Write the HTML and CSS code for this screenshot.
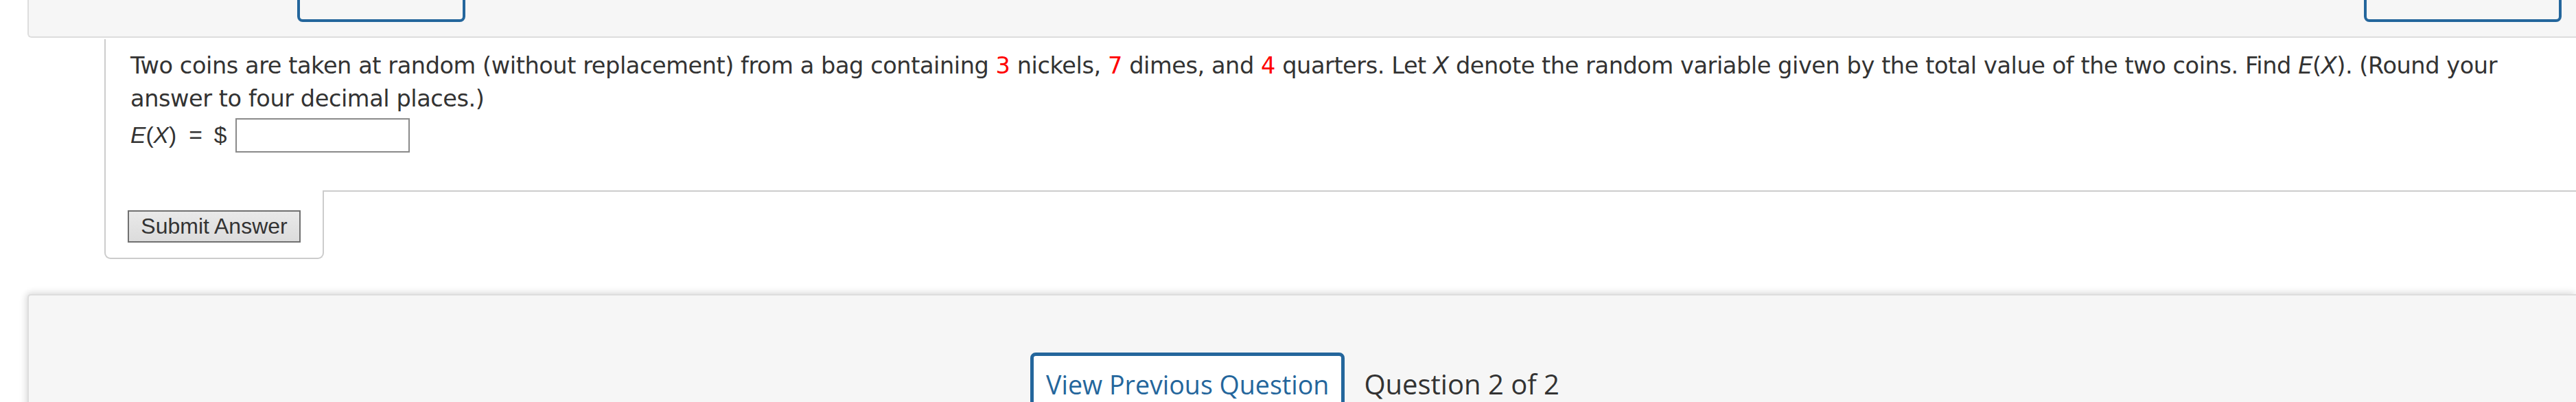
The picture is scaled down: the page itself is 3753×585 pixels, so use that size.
FILE: index.html
```html
<!DOCTYPE html>
<html lang="en">
<head>
<meta charset="utf-8">
<title>Question 2 of 2</title>
<link rel="stylesheet" href="styles.css">
</head>
<body>
<div class="top-panel">
  <div class="top-box top-box-left"></div>
  <div class="top-spacer"></div>
  <div class="top-box top-box-right"></div>
</div>

<div class="question">
  <p class="q-text">Two coins are taken at random (without replacement) from a bag containing <span class="red">3</span> nickels, <span class="red">7</span> dimes, and <span class="red">4</span> quarters. Let <i>X</i> denote the random variable given by the total value of the two coins. Find <i>E</i>(<i>X</i>). (Round your answer to four decimal places.)</p>
  <div class="answer-row">
    <span class="math"><i>E</i>(<i>X</i>)</span><span class="math eq">=</span><span class="math dollar">$</span>
    <input class="answer-input" type="text" aria-label="E(X)">
  </div>
</div>
<div class="submit-row">
  <div class="submit-tab">
    <button class="submit-btn" type="button">Submit Answer</button>
  </div>
  <div class="submit-filler"></div>
</div>

<div class="nav-panel">
  <button class="prev-btn" type="button">View Previous Question</button>
  <span class="q-count">Question 2 of 2</span>
</div>
</body>
</html>
```

FILE: styles.css
```css
html, body {
  margin: 0;
  padding: 0;
  background: #ffffff;
  overflow: hidden;
}

body {
  color: #333333;
  font-family: "DejaVu Sans", Verdana, sans-serif;
}

/* top panel (cut off at the top of the viewport) */
.top-panel {
  margin-left: 40px;
  height: 55px;
  box-sizing: border-box;
  background: #f6f6f6;
  border-left: 2px solid #dddddd;
  border-bottom: 2px solid #dddddd;
  border-bottom-left-radius: 6px;
  display: flex;
  align-items: flex-end;
  padding: 0 21px 21px 391px;
  overflow: hidden;
}

.top-spacer {
  flex: 1;
}

.top-box {
  height: 90px;
  flex: none;
  box-sizing: border-box;
  border: 4px solid #24669c;
  border-radius: 8px;
  background: #f6f6f6;
}

.top-box-left { width: 245px; }
.top-box-right { width: 288px; }

/* question block */
.question {
  margin-left: 152px;
  margin-top: 2px;
  border-left: 2px solid #cccccc;
  padding: 15px 0 55px 36px;
}

.q-text {
  margin: 0;
  font-size: 33.6px;
  line-height: 48px;
  letter-spacing: -0.44px;
  max-width: 3500px;
}

.red {
  color: #ff0000;
}

.answer-row {
  display: flex;
  align-items: center;
  margin-top: 4px;
  height: 50px;
}

.math {
  font-family: "Liberation Sans", Arial, sans-serif;
  font-size: 33.6px;
}

.eq {
  margin: 0 17px 0 18px;
}

.dollar {
  margin-right: 13px;
}

.answer-input {
  width: 254px;
  height: 50px;
  box-sizing: border-box;
  border: 2px solid #8a8a8a;
  border-radius: 0;
  background: #ffffff;
  margin: 0;
  padding: 0;
}

/* submit tab */
.submit-row {
  display: flex;
  margin-left: 152px;
}

.submit-tab {
  border: 2px solid #cccccc;
  border-top: none;
  border-radius: 0 0 9px 9px;
  padding: 29px 32px 22px 32px;
}

.submit-btn {
  display: block;
  width: 252px;
  height: 47px;
  margin: 0;
  padding: 0;
  box-sizing: border-box;
  border: 2px solid #707070;
  background: linear-gradient(#e9e9e9, #dcdcdc);
  font-family: "Liberation Sans", Arial, sans-serif;
  font-size: 32px;
  color: #333333;
}

.submit-filler {
  flex: 1;
  border-top: 2px solid #cccccc;
}

/* bottom navigation panel */
.nav-panel {
  margin-top: 51px;
  margin-left: 40px;
  height: 200px;
  background: #f6f6f6;
  border-top: 2px solid #dddddd;
  border-left: 2px solid #dddddd;
  border-top-left-radius: 5px;
  box-shadow: 0 -4px 10px rgba(0, 0, 0, 0.08), -4px 0 10px rgba(0, 0, 0, 0.08);
  display: flex;
  align-items: baseline;
  justify-content: center;
  padding-top: 83px;
  padding-right: 22px;
  box-sizing: border-box;
  font-family: "Open Sans", "Noto Sans", sans-serif;
  font-size: 37.6px;
}

.prev-btn {
  font-family: "Open Sans", "Noto Sans", sans-serif;
  font-size: 37.6px;
  color: #24669c;
  background: #ffffff;
  border: 5px solid #24669c;
  border-radius: 8px;
  padding: 16px 18px 16px 18px;
  margin: 0 28px 0 0;
  line-height: normal;
}

.q-count {
  color: #333333;
  font-size: 40px;
}
```
